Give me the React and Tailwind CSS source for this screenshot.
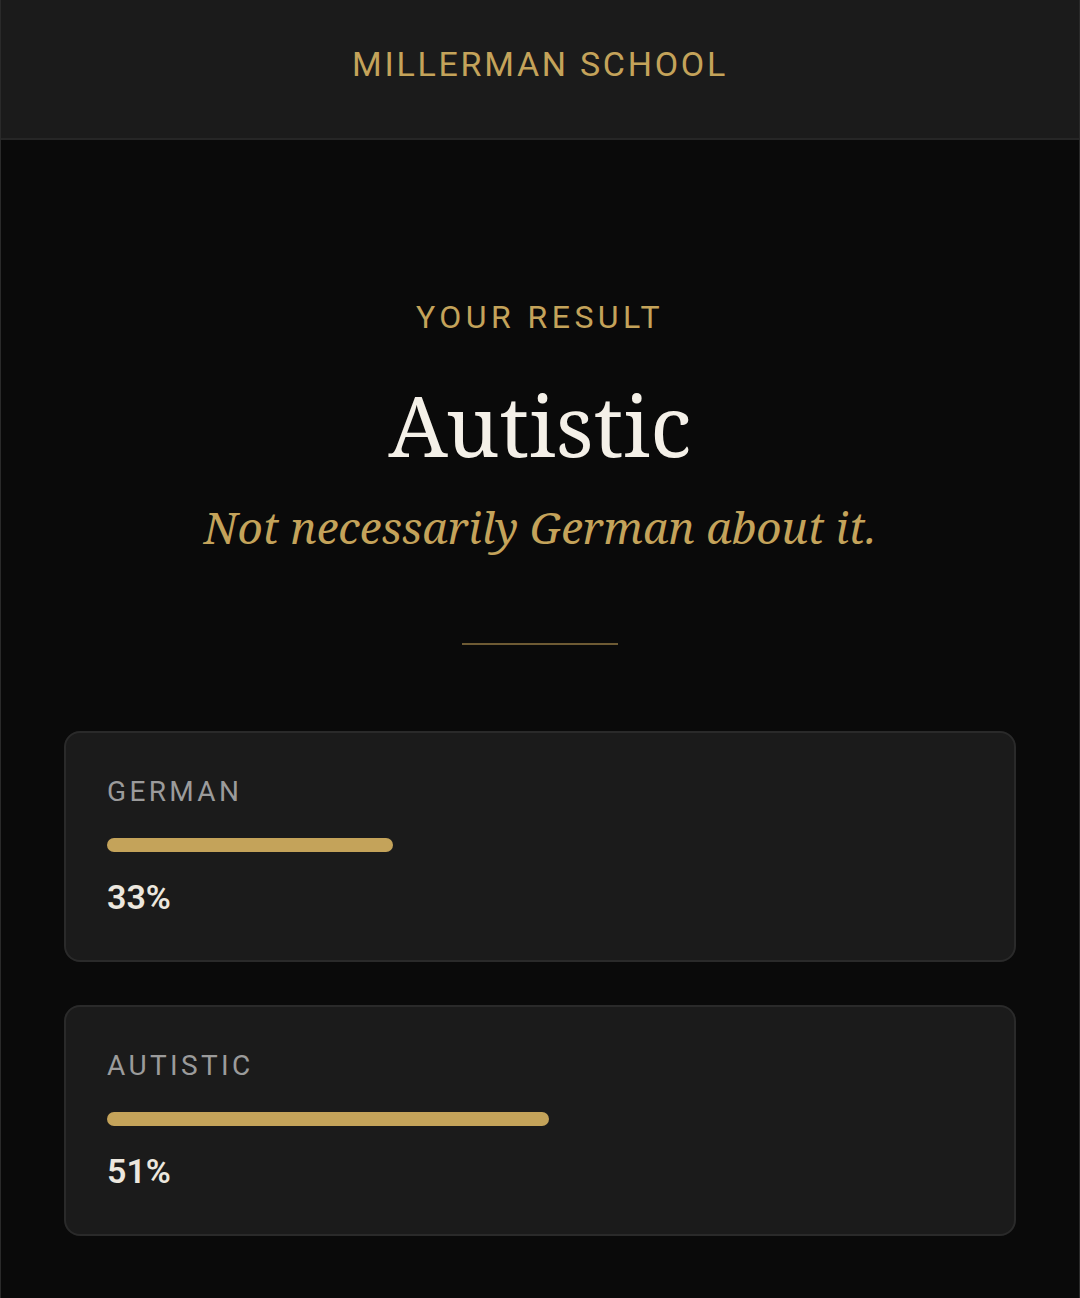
import React from "react";

const scores = [
  { label: "GERMAN", value: 33 },
  { label: "AUTISTIC", value: 51 },
];

const sans = { fontFamily: "Roboto, 'Liberation Sans', sans-serif" };
const serif = { fontFamily: "'Noto Serif', 'DejaVu Serif', serif" };

const ScoreCard = ({ label, value }) => (
  <div className="rounded-2xl border-2 border-[#2a2a2a] bg-[#1b1b1b] px-[41px] pt-[45px] pb-[46px]">
    <div
      className="text-[28px] leading-none tracking-[0.12em] text-[#9b9b9b]"
      style={sans}
    >
      {label}
    </div>
    <div className="mt-[32px] h-[14px] w-full">
      <div
        className="h-full rounded-full bg-[#c4a35a]"
        style={{ width: value + "%" }}
      />
    </div>
    <div
      className="mt-[28px] text-[34px] font-semibold leading-none text-[#ece7de]"
      style={sans}
    >
      {value}%
    </div>
  </div>
);

export default function App() {
  return (
    <div className="min-h-[1298px] border-x border-[#2a2a2a] bg-[#0a0a0a]">
      <header className="flex h-[140px] items-center justify-center border-b-2 border-[#262626] bg-[#1b1b1b] pb-[10px]">
        <span
          className="text-[34px] leading-none tracking-[0.08em] text-[#c4a35a]"
          style={sans}
        >
          MILLERMAN SCHOOL
        </span>
      </header>

      <main className="flex flex-col items-center px-[63px] pt-[161px]">
        <div
          className="text-[32px] leading-none tracking-[0.14em] text-[#c4a35a]"
          style={sans}
        >
          YOUR RESULT
        </div>
        <h1
          className="mt-[50px] text-[84px] leading-none text-[#f4f0e8]"
          style={serif}
        >
          Autistic
        </h1>
        <p
          className="mt-[38px] text-[44px] italic leading-none text-[#c4a35a]"
          style={serif}
        >
          Not necessarily German about it.
        </p>
        <div className="mt-[94px] h-[2px] w-[156px] bg-[#6e5b34]" />

        <div className="mt-[86px] flex w-full flex-col gap-[43px]">
          {scores.map((s) => (
            <ScoreCard key={s.label} {...s} />
          ))}
        </div>
      </main>
    </div>
  );
}
